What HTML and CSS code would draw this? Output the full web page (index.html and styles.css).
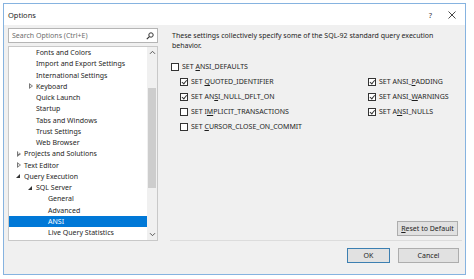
FILE: index.html
```html
<!DOCTYPE html>
<html lang="en">
<head>
    <meta charset="UTF-8">
    <title>Options</title>
    <link rel="stylesheet" href="styles.css">
</head>
<body>
    <div class="window">
        <div class="titlebar">
            <span class="title">Options</span>
            <span class="help">?</span>
            <span class="close">
                <svg width="8" height="8" viewBox="0 0 8 8"><path d="M0.5 0.5L7.5 7.5M7.5 0.5L0.5 7.5" stroke="#333" stroke-width="0.9"/></svg>
            </span>
        </div>

        <div class="main">
            <div class="nav">
                <div class="search">
                    <span class="placeholder">Search Options (Ctrl+E)</span>
                    <svg class="search-icon" width="8" height="8" viewBox="0 0 8 8"><circle cx="5" cy="3" r="2.2" fill="none" stroke="#333" stroke-width="1"/><path d="M3.4 4.6L0.8 7.2" stroke="#333" stroke-width="1.2"/></svg>
                </div>
                <div class="tree">
                    <ul class="tree-list">
                        <li class="lvl1">Fonts and Colors</li>
                        <li class="lvl1">Import and Export Settings</li>
                        <li class="lvl1">International Settings</li>
                        <li class="lvl1"><span class="arrow closed"></span>Keyboard</li>
                        <li class="lvl1">Quick Launch</li>
                        <li class="lvl1">Startup</li>
                        <li class="lvl1">Tabs and Windows</li>
                        <li class="lvl1">Trust Settings</li>
                        <li class="lvl1">Web Browser</li>
                        <li class="lvl0"><span class="arrow closed"></span>Projects and Solutions</li>
                        <li class="lvl0"><span class="arrow closed"></span>Text Editor</li>
                        <li class="lvl0"><span class="arrow open"></span>Query Execution</li>
                        <li class="lvl1"><span class="arrow open"></span>SQL Server</li>
                        <li class="lvl2">General</li>
                        <li class="lvl2">Advanced</li>
                        <li class="lvl2 selected">ANSI</li>
                        <li class="lvl2">Live Query Statistics</li>
                        <li class="lvl1"><span class="arrow closed"></span>Analysis Server</li>
                    </ul>
                    <div class="scrollbar">
                        <svg class="sb-arrow" width="7" height="5" viewBox="0 0 7 5"><path d="M1 3.8L3.5 1.3L6 3.8" fill="none" stroke="#555" stroke-width="1"/></svg>
                        <div class="sb-track"><div class="sb-thumb"></div></div>
                        <svg class="sb-arrow" width="7" height="5" viewBox="0 0 7 5"><path d="M1 1.2L3.5 3.7L6 1.2" fill="none" stroke="#555" stroke-width="1"/></svg>
                    </div>
                </div>
            </div>

            <div class="page">
                <p class="desc">These settings collectively specify some of the SQL-92 standard query execution<br>behavior.</p>
                <div class="checks">
                    <label class="check wide"><span class="box"></span><span>SET <u>A</u>NSI_DEFAULTS</span></label>
                    <label class="check sub"><span class="box on"></span><span>SET <u>Q</u>UOTED_IDENTIFIER</span></label>
                    <label class="check"><span class="box on"></span><span>SET ANSI_<u>P</u>ADDING</span></label>
                    <label class="check sub"><span class="box on"></span><span>SET AN<u>S</u>I_NULL_DFLT_ON</span></label>
                    <label class="check"><span class="box on"></span><span>SET ANSI_<u>W</u>ARNINGS</span></label>
                    <label class="check sub"><span class="box"></span><span>SET I<u>M</u>PLICIT_TRANSACTIONS</span></label>
                    <label class="check"><span class="box on"></span><span>SET A<u>N</u>SI_NULLS</span></label>
                    <label class="check sub"><span class="box"></span><span>SET <u>C</u>URSOR_CLOSE_ON_COMMIT</span></label>
                </div>
                <div class="page-foot">
                    <button class="btn"><u>R</u>eset to Default</button>
                </div>
            </div>
        </div>

        <div class="footer">
            <button class="btn default">OK</button>
            <button class="btn">Cancel</button>
        </div>
    </div>
</body>
</html>
```

FILE: styles.css
```css
body {
    margin: 0;
    background: #fff;
    font-family: 'Noto Sans', 'Open Sans', sans-serif;
    font-size: 7px;
    color: #1e1e1e;
}
.window {
    margin: 3px 0 0 3px;
    width: 461px;
    height: 270px;
    border: 1px solid #86b3e0;
    background: #f0f0f0;
    display: flex;
    flex-direction: column;
}
.titlebar {
    height: 21px;
    background: #fff;
    display: flex;
    align-items: center;
    padding: 0 9px 0 4px;
    font-size: 7.5px;
}
.title {
    flex: 1;
}
.help {
    margin-right: 16px;
    color: #333;
}
.close {
    display: flex;
}

.main {
    display: flex;
    height: 216px;
    padding-left: 4px;
}
.nav {
    width: 150px;
    padding-top: 3px;
    display: flex;
    flex-direction: column;
    gap: 3px;
}
.search {
    height: 13px;
    border: 1px solid #b5b5b5;
    background: #fff;
    display: flex;
    align-items: center;
    padding: 0 3px;
}
.placeholder {
    flex: 1;
    color: #6d6d6d;
}
.tree {
    flex: 1;
    border: 1px solid #c8c8c8;
    background: #fff;
    display: flex;
    overflow: hidden;
}
.tree-list {
    list-style: none;
    margin: 0;
    padding: 0;
    flex: 1;
}
.tree-list li {
    height: 11.25px;
    line-height: 11.25px;
    white-space: nowrap;
    display: flex;
    align-items: center;
}
.lvl0 { padding-left: 15px; }
.lvl1 { padding-left: 27px; }
.lvl2 { padding-left: 39px; }
.tree-list li.selected {
    background: #0078d7;
    color: #fff;
}
.arrow {
    width: 8px;
    margin-left: -8px;
    height: 6px;
    position: relative;
}
.arrow.closed::before {
    content: "";
    position: absolute;
    left: 1px;
    top: 0;
    border-left: 4px solid #777;
    border-top: 3px solid transparent;
    border-bottom: 3px solid transparent;
}
.arrow.closed::after {
    content: "";
    position: absolute;
    left: 1.8px;
    top: 1.6px;
    border-left: 2px solid #fff;
    border-top: 1.4px solid transparent;
    border-bottom: 1.4px solid transparent;
}
.arrow.open::before {
    content: "";
    position: absolute;
    left: 0;
    top: 1px;
    border-right: 4px solid #333;
    border-top: 4px solid transparent;
}
.scrollbar {
    width: 10px;
    background: #f0f0f0;
    display: flex;
    flex-direction: column;
    align-items: center;
}
.sb-arrow {
    margin: 3px 0;
}
.sb-track {
    flex: 1;
    width: 100%;
    padding-top: 30px;
}
.sb-thumb {
    margin: 0 auto;
    width: 8px;
    height: 100px;
    background: #cdcdcd;
}

.page {
    margin-left: 12px;
    width: 292px;
    padding-top: 6px;
    border-bottom: 1px solid #dcdcdc;
    display: flex;
    flex-direction: column;
}
.desc {
    margin: 0 0 8px 2px;
    line-height: 10px;
    white-space: nowrap;
}
.checks {
    display: grid;
    grid-template-columns: 197px auto;
    grid-auto-rows: 15px;
    padding-left: 1px;
}
.check {
    display: flex;
    align-items: center;
    white-space: nowrap;
}
.check.wide {
    grid-column: 1 / 3;
}
.check.sub {
    padding-left: 9px;
}
.check u {
    text-decoration-thickness: 0.5px;
}
.box {
    width: 6px;
    height: 6px;
    border: 1px solid #333;
    background: #fff;
    margin-right: 3px;
    position: relative;
}
.box.on::after {
    content: "";
    position: absolute;
    left: 1.6px;
    top: 0.2px;
    width: 1.8px;
    height: 3.6px;
    border-right: 0.9px solid #333;
    border-bottom: 0.9px solid #333;
    transform: rotate(40deg);
}
.page-foot {
    margin-top: auto;
    display: flex;
    justify-content: flex-end;
    padding: 0 4px 4px 0;
}
.btn {
    font-family: inherit;
    font-size: 7px;
    color: #1e1e1e;
    height: 15px;
    padding: 0;
    background: #e1e1e1;
    border: 1px solid #adadad;
    width: 61px;
}
.btn.default {
    border-color: #3c7fb1;
    width: 43px;
}
.footer {
    flex: 1;
    display: flex;
    justify-content: flex-end;
    gap: 8px;
    padding: 7px 6px 0 0;
    align-items: flex-start;
}
```
